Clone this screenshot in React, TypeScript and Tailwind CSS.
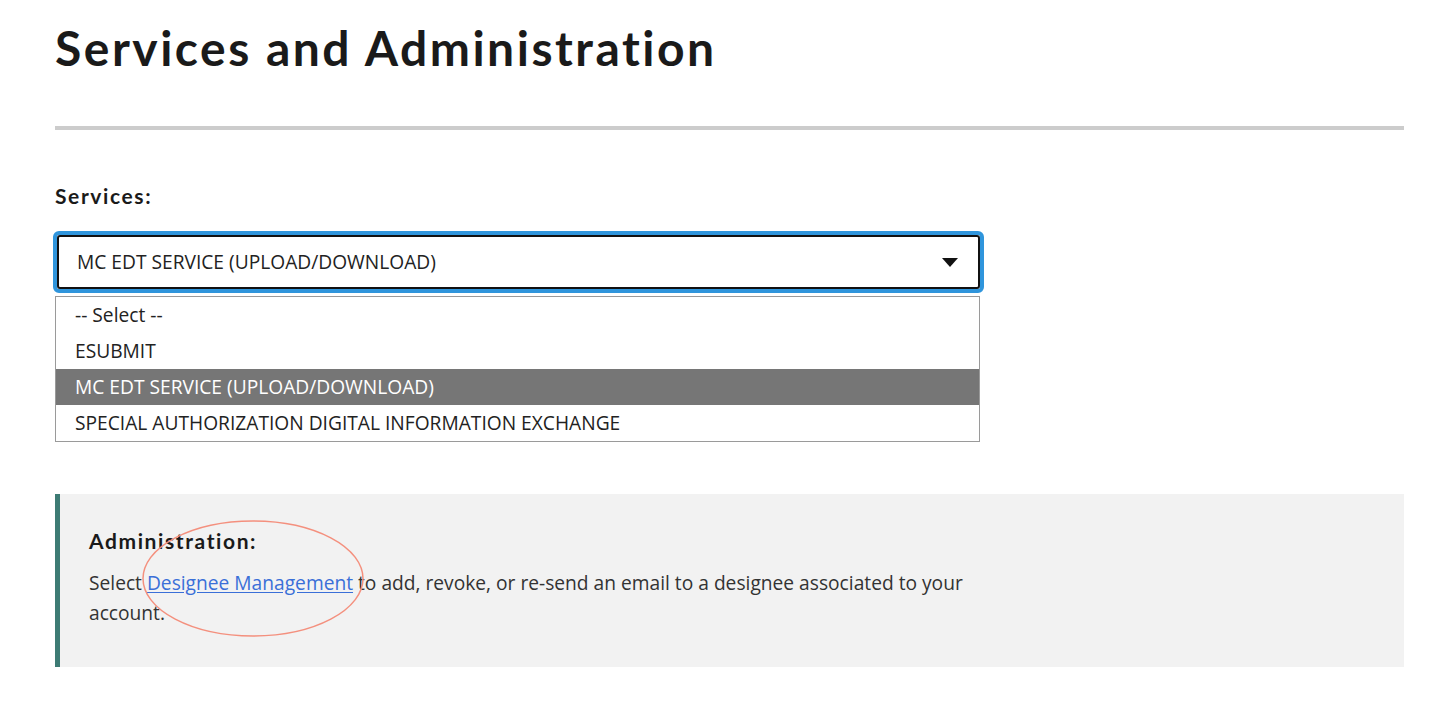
import React from "react";

const options = [
  "-- Select --",
  "ESUBMIT",
  "MC EDT SERVICE (UPLOAD/DOWNLOAD)",
  "SPECIAL AUTHORIZATION DIGITAL INFORMATION EXCHANGE",
];

export default function App() {
  const selected = 2;
  return (
    <div className="min-h-[721px] w-[1430px] bg-white pl-[55px] pr-[26px] pt-[20px] font-['Open_Sans',sans-serif] text-[#222]">
      <h1 className="font-['Lato',sans-serif] text-[48px] font-bold leading-[56px] tracking-[2.5px] text-[#1a1a1a]">
        Services and Administration
      </h1>

      <div className="mt-[50px] h-[4px] w-full bg-[#cccccc]" />

      <div className="mt-[52px] font-['Lato',sans-serif] text-[21px] font-bold leading-[28px] tracking-[1.6px] text-[#1a1a1a]">
        Services:
      </div>

      {/* service picker with its open list */}
      <div className="mt-[21px] w-[929px]">
        <div className="-ml-[2px] rounded-[6px] border-[4px] border-[#2f95dc]">
          <div className="flex h-[54px] items-center justify-between rounded-[3px] border-[2px] border-[#111] bg-white pl-[18px] pr-[20px]">
            <span className="text-[19.2px] leading-[24px] text-[#222]">MC EDT SERVICE (UPLOAD/DOWNLOAD)</span>
            <svg width="16" height="9" viewBox="0 0 16 9" className="mt-[1px]">
              <path d="M0 0 L16 0 L8 9 Z" fill="#111" />
            </svg>
          </div>
        </div>
        <ul className="mt-[3px] w-[925px] border border-[#9a9a9a] bg-white">
          {options.map((o, i) => (
            <li
              key={o}
              className={
                i === selected
                  ? "flex h-[36px] items-center bg-[#767676] pl-[19px] text-[19.2px] text-white"
                  : "flex h-[36px] items-center pl-[19px] text-[19.2px] text-[#222]"
              }
            >
              {o}
            </li>
          ))}
        </ul>
      </div>

      {/* administration callout */}
      <div className="relative mt-[52px] h-[173px] border-l-[5px] border-[#3d7b74] bg-[#f2f2f2] pl-[29px] pt-[33px]">
        <div className="font-['Lato',sans-serif] text-[21px] font-bold leading-[28px] tracking-[1.6px] text-[#1a1a1a]">
          Administration:
        </div>
        <p className="mt-[13px] w-[890px] text-[19.2px] leading-[30px] text-[#333]">
          Select{" "}
          <a href="#" className="text-[#3a6fd8] underline underline-offset-2">
            Designee Management
          </a>{" "}
          to add, revoke, or re-send an email to a designee associated to your account.
        </p>
        <svg
          className="pointer-events-none absolute left-[80px] top-[24px]"
          width="226"
          height="121"
          viewBox="0 0 226 121"
        >
          <ellipse cx="113" cy="60.5" rx="110" ry="57.5" fill="none" stroke="#f4907e" strokeWidth="1.5" />
        </svg>
      </div>
    </div>
  );
}
